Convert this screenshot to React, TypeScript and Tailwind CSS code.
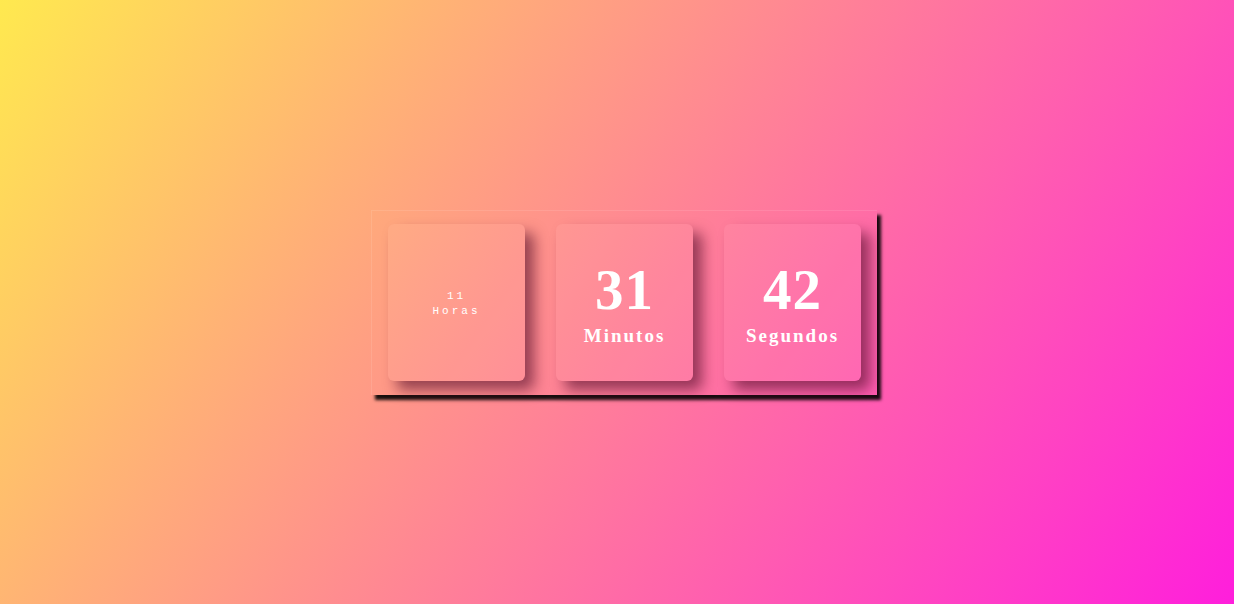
import React from 'react';

const units = [
  { value: '11', label: 'Horas', mono: true },
  { value: '31', label: 'Minutos', mono: false },
  { value: '42', label: 'Segundos', mono: false },
];

function TimeCard({ value, label, mono }: { value: string; label: string; mono: boolean }) {
  return (
    <div className="flex h-[157px] w-[137px] flex-col items-center justify-center rounded-[6px] bg-white/5 text-white shadow-[9px_9px_14px_rgba(80,10,40,0.6)]">
      {mono ? (
        <div className="mt-[4px] text-center text-[11px] leading-[15px] tracking-[3px] font-['Liberation_Mono',monospace]">
          <div>{value}</div>
          <div>{label}</div>
        </div>
      ) : (
        <div className="mt-[6px] flex flex-col items-center font-['Liberation_Serif',serif] font-bold">
          <span className="text-[57px] leading-[56px] tracking-[1px]">{value}</span>
          <span className="mt-[6px] text-[19px] leading-[24px] tracking-[2px]">{label}</span>
        </div>
      )}
    </div>
  );
}

export default function App() {
  return (
    <div className="flex h-screen w-full items-center justify-center bg-[linear-gradient(125deg,#ffe94f,#ff1edc)] pl-[14px]">
      {/* countdown box */}
      <div className="flex gap-[31px] border-t border-l border-white/10 px-[16px] pt-[13px] pb-[14px] shadow-[4px_5px_3px_rgba(0,0,0,0.9)]">
        {units.map((u) => (
          <TimeCard key={u.label} {...u} />
        ))}
      </div>
    </div>
  );
}
